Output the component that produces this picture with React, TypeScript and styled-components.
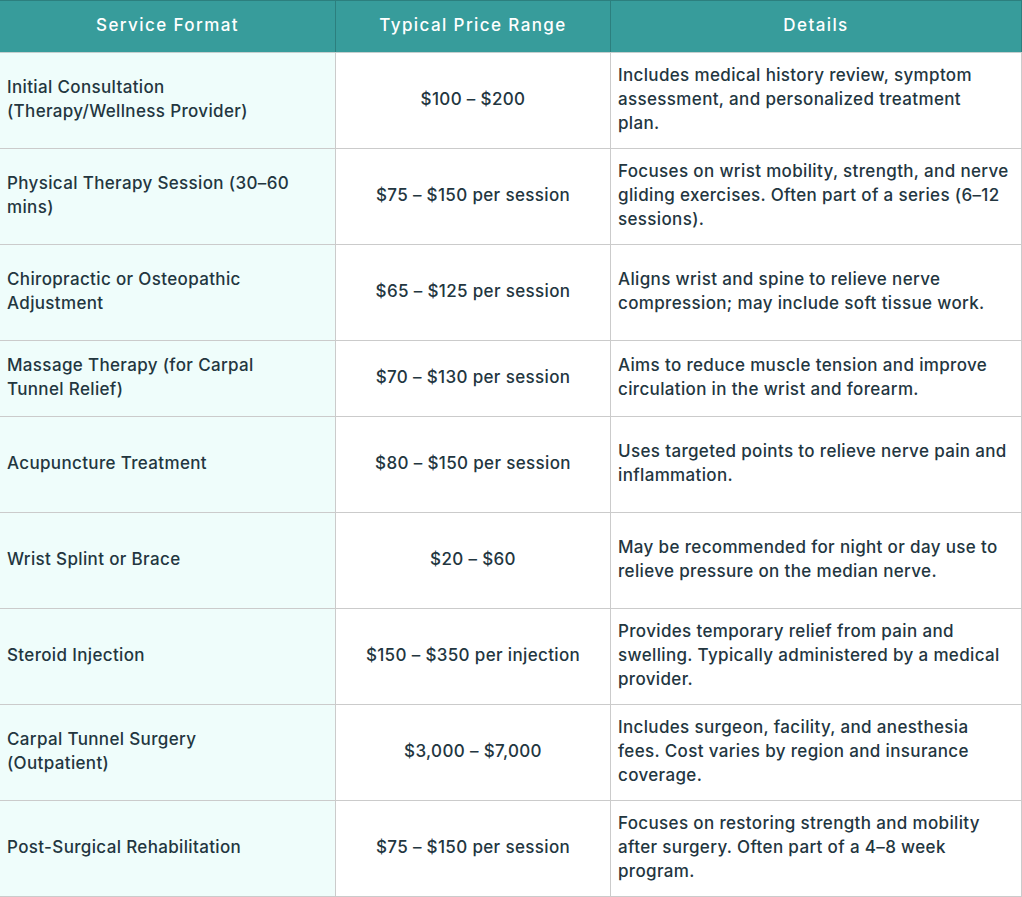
import React from "react"
import styled, { createGlobalStyle } from "styled-components"

interface IService {
  name: string[]
  price: string
  details: string[]
  height: number
}

// line breaks follow the reference layout
const services: IService[] = [
  {
    name: ["Initial Consultation", "(Therapy/Wellness Provider)"],
    price: "$100 – $200",
    details: ["Includes medical history review, symptom", "assessment, and personalized treatment", "plan."],
    height: 96
  },
  {
    name: ["Physical Therapy Session (30–60", "mins)"],
    price: "$75 – $150 per session",
    details: ["Focuses on wrist mobility, strength, and nerve", "gliding exercises. Often part of a series (6–12", "sessions)."],
    height: 96
  },
  {
    name: ["Chiropractic or Osteopathic", "Adjustment"],
    price: "$65 – $125 per session",
    details: ["Aligns wrist and spine to relieve nerve", "compression; may include soft tissue work."],
    height: 96
  },
  {
    name: ["Massage Therapy (for Carpal", "Tunnel Relief)"],
    price: "$70 – $130 per session",
    details: ["Aims to reduce muscle tension and improve", "circulation in the wrist and forearm."],
    height: 76
  },
  {
    name: ["Acupuncture Treatment"],
    price: "$80 – $150 per session",
    details: ["Uses targeted points to relieve nerve pain and", "inflammation."],
    height: 96
  },
  {
    name: ["Wrist Splint or Brace"],
    price: "$20 – $60",
    details: ["May be recommended for night or day use to", "relieve pressure on the median nerve."],
    height: 96
  },
  {
    name: ["Steroid Injection"],
    price: "$150 – $350 per injection",
    details: ["Provides temporary relief from pain and", "swelling. Typically administered by a medical", "provider."],
    height: 96
  },
  {
    name: ["Carpal Tunnel Surgery", "(Outpatient)"],
    price: "$3,000 – $7,000",
    details: ["Includes surgeon, facility, and anesthesia", "fees. Cost varies by region and insurance", "coverage."],
    height: 96
  },
  {
    name: ["Post-Surgical Rehabilitation"],
    price: "$75 – $150 per session",
    details: ["Focuses on restoring strength and mobility", "after surgery. Often part of a 4–8 week", "program."],
    height: 96
  }
]

const GlobalStyle = createGlobalStyle`
  body {
    margin: 0;
    background: #ffffff;
    font-family: Inter, "Noto Sans", sans-serif;
  }
`

const Table = styled.div`
  width: 1022px;
  display: flex;
  flex-direction: column;
  color: #23363f;
  font-size: 17px;
  font-weight: 500;
  line-height: 24px;
  letter-spacing: 0.35px;
`

const Row = styled.div<{ $height: number }>`
  display: grid;
  grid-template-columns: 336px 275px 1fr;
  height: ${({ $height }) => $height}px;
  box-sizing: border-box;
  border-bottom: 1px solid #cbcbcb;
`

const HeaderRow = styled.div`
  display: grid;
  grid-template-columns: 336px 275px 1fr;
  height: 53px;
  background: #379c9b;
  border-top: 1px solid #2c7f7e;
  border-bottom: 1px solid #c6cfcf;
  box-sizing: border-box;
`

const HeaderCell = styled.div`
  display: flex;
  align-items: center;
  justify-content: center;
  padding-bottom: 3px;
  color: #ffffff;
  font-size: 17px;
  font-weight: 500;
  letter-spacing: 1.4px;
  border-right: 1px solid #2c7f7e;
`

const Cell = styled.div<{ $tint?: boolean; $center?: boolean }>`
  display: flex;
  flex-direction: column;
  justify-content: center;
  align-items: ${({ $center }) => ($center ? "center" : "flex-start")};
  padding: 0 7px 4px;
  background: ${({ $tint }) => ($tint ? "#effdfb" : "#ffffff")};
  border-right: 1px solid #cbcbcb;
  overflow: hidden;
`

const Line = styled.span`
  display: block;
  white-space: nowrap;
`

const App: React.FC = () => (
  <>
    <GlobalStyle />
    <Table>
      <HeaderRow>
        <HeaderCell>Service Format</HeaderCell>
        <HeaderCell>Typical Price Range</HeaderCell>
        <HeaderCell>Details</HeaderCell>
      </HeaderRow>
      {services.map((s: IService) => (
        <Row key={s.price + s.name[0]} $height={s.height}>
          <Cell $tint>
            {s.name.map((l) => (
              <Line key={l}>{l}</Line>
            ))}
          </Cell>
          <Cell $center>{s.price}</Cell>
          <Cell>
            {s.details.map((l) => (
              <Line key={l}>{l}</Line>
            ))}
          </Cell>
        </Row>
      ))}
    </Table>
  </>
)

export default App
